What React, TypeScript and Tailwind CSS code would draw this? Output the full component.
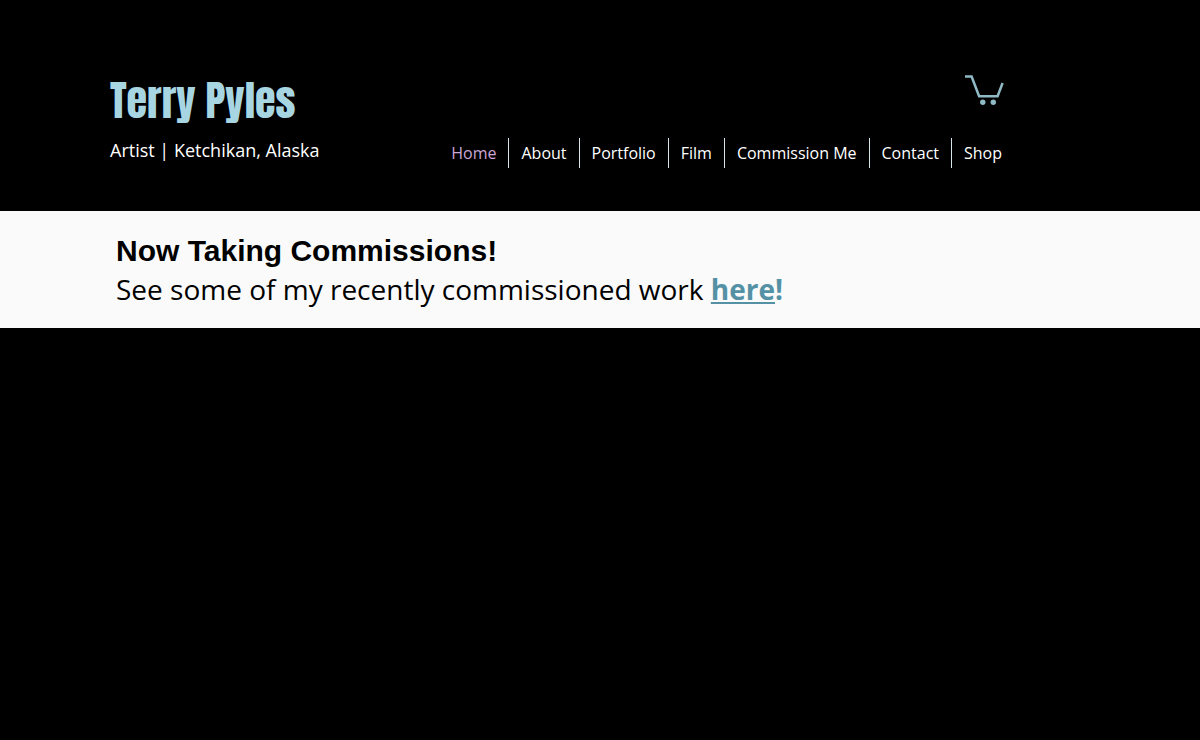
const links = ["Home", "About", "Portfolio", "Film", "Commission Me", "Contact", "Shop"];

function CartIcon() {
  return (
    <svg width="40" height="32" viewBox="0 0 40 32" fill="none" aria-hidden="true">
      <path d="M1 2.5H7.6L15.1 22.3H33.6L38.6 9" stroke="#8fb9c4" strokeWidth="2.5" />
      <circle cx="18.8" cy="28.2" r="2.7" fill="#8fb9c4" />
      <circle cx="29.3" cy="28.2" r="2.7" fill="#8fb9c4" />
    </svg>
  );
}

export default function App() {
  return (
    <div className="min-h-screen bg-black font-['Open_Sans',sans-serif] text-white">
      <header className="flex max-w-[1004px] items-start justify-between pb-[43px] pl-[110px]">
        <div className="pt-[73px]">
          <h1 className="font-['Anton','Liberation_Sans',sans-serif] text-[42px] leading-[56px] text-[#a8d5e2]">Terry Pyles</h1>
          <p className="pt-[9px] text-[18px] leading-[24px]">Artist | Ketchikan, Alaska</p>
        </div>
        <div className="flex flex-col items-end pt-[74px]">
          <a href="#cart" aria-label="Cart" className="block"><CartIcon /></a>
          <nav className="flex pt-[32px]">
            {links.map((label, i) => (
              <a
                key={label}
                href="#"
                className={`border-r border-[#d5e4e6] px-3 text-[16px] leading-[30px] last:border-r-0 last:pr-[2px] ${i === 0 ? "text-[#cba6d6]" : ""}`}
              >
                {label}
              </a>
            ))}
          </nav>
        </div>
      </header>
      <main className="bg-[#fafafa] pt-[20px] pb-[21px] pl-[116px] text-black">
        <h2 className="font-['Liberation_Sans',sans-serif] text-[30px] leading-[40px] font-bold">Now Taking Commissions!</h2>
        <p className="text-[28px] leading-[36px]">
          See some of my recently commissioned work{" "}
          <span className="font-bold text-[#5591a5]"><a href="#" className="underline">here</a>!</span>
        </p>
      </main>
    </div>
  );
}
